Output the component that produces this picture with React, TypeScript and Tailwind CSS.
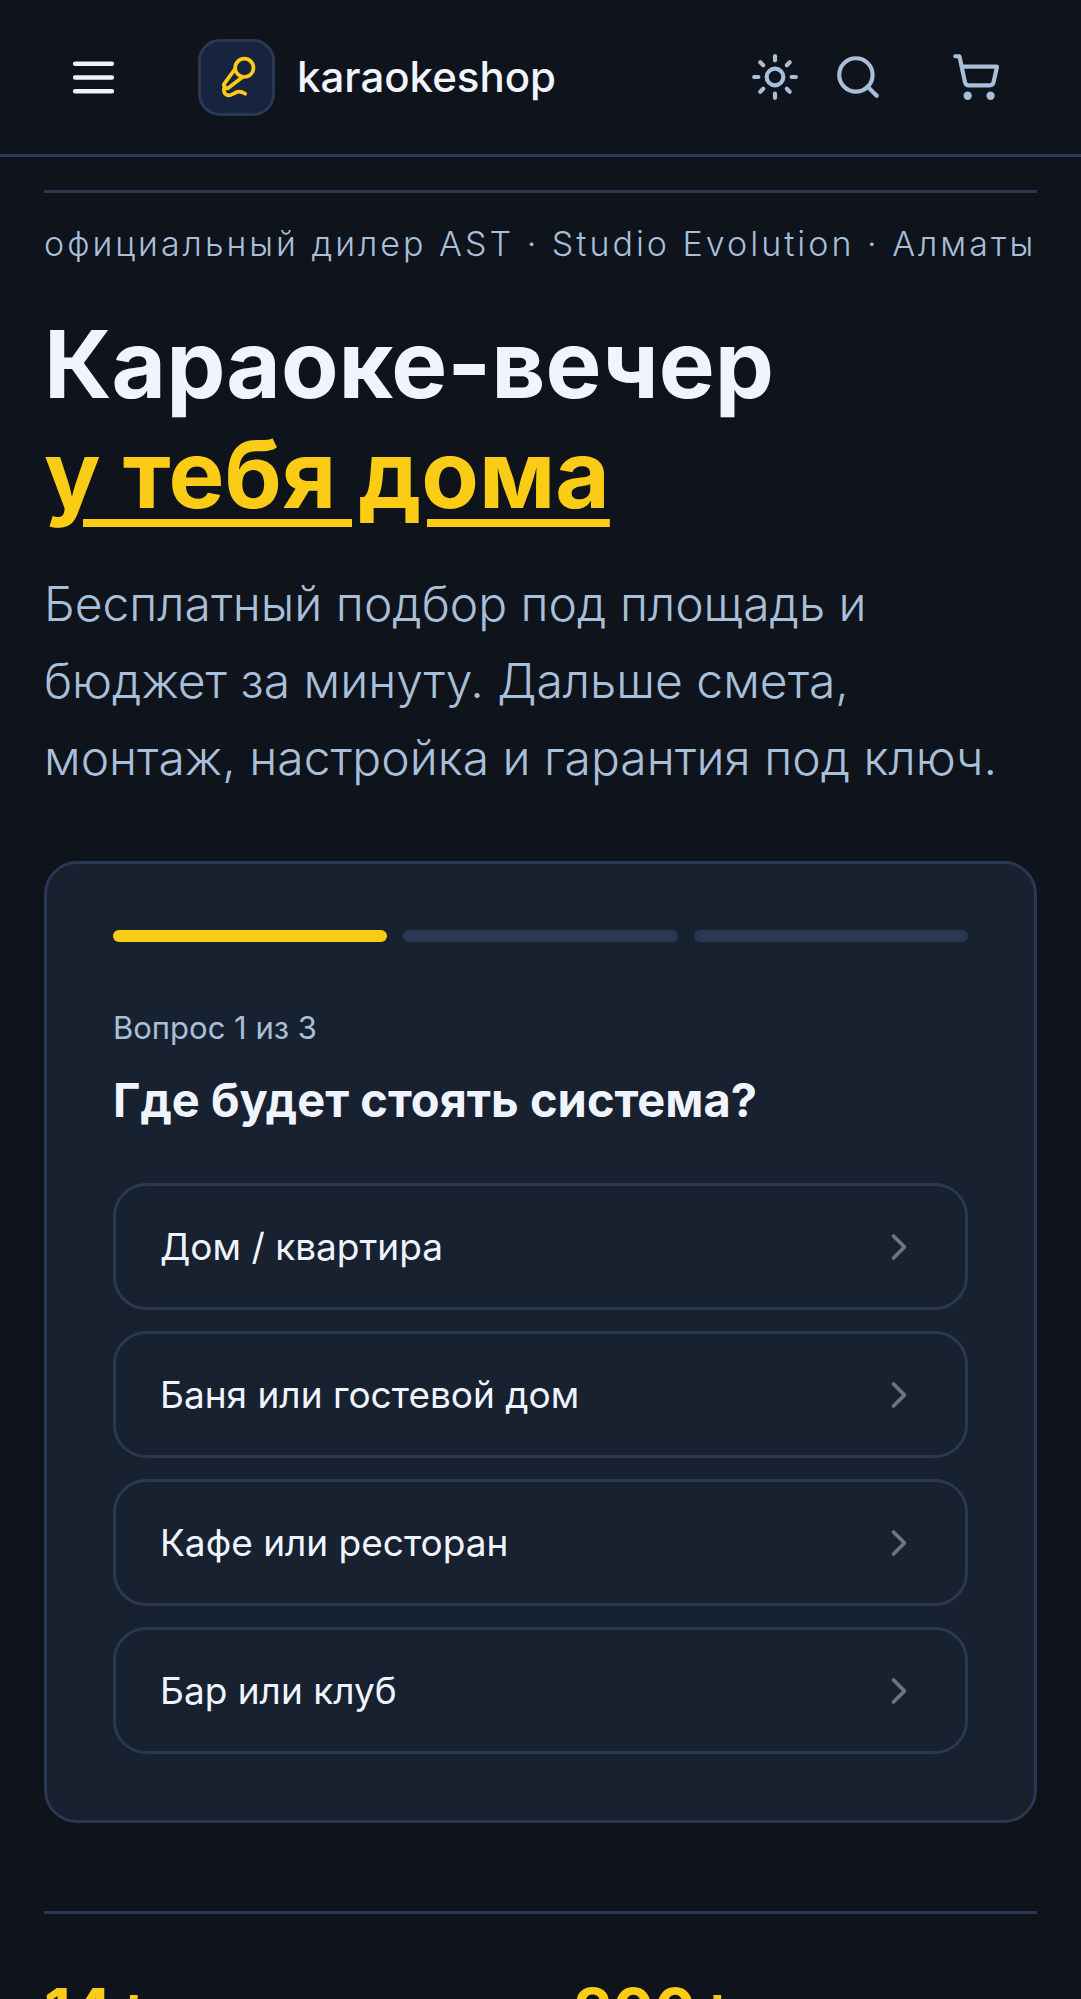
import React, { useState } from 'react';
import { ChevronRight, MicVocal, Search, ShoppingCart, Sun } from 'lucide-react';

const options = ['Дом / квартира', 'Баня или гостевой дом', 'Кафе или ресторан', 'Бар или клуб'];

const stats = ['14+', '200+'];

const Header: React.FC = () => (
  <header className="flex items-center h-[157px] pl-[66px] pr-[80px] border-b-3 border-[#2a3852]">
    <button type="button" aria-label="Меню" className="shrink-0">
      <svg className="w-[55px] h-[55px]" viewBox="0 0 24 24" fill="none" stroke="currentColor" strokeWidth="2" strokeLinecap="round">
        <path d="M4 6h16M4 12h16M4 18h16" />
      </svg>
    </button>

    <a href="#" className="flex items-center gap-[22px] ml-[77px]">
      <span className="flex items-center justify-center w-[77px] h-[77px] rounded-[22px] border-3 border-[#2a3852] bg-[#18233f] text-[#facc15]">
        <MicVocal size={44} />
      </span>
      <span className="text-[42px] leading-[66px] font-medium">karaokeshop</span>
    </a>

    <div className="flex items-center ml-auto text-[#a8bfda]">
      <button type="button" aria-label="Светлая тема"><Sun size={50} /></button>
      <button type="button" aria-label="Поиск" className="ml-[33px]"><Search size={50} /></button>
      <a href="#" aria-label="Корзина" className="ml-[68px]"><ShoppingCart size={50} /></a>
    </div>
  </header>
);

const Quiz: React.FC = () => {
  const [selected, setSelected] = useState<string | null>(null);

  return (
    <section className="mt-[65px] p-[66px] rounded-[33px] border-3 border-[#2a3852] bg-[#18212f]">
      {/* Step progress */}
      <div className="grid grid-cols-3 gap-[16px]">
        <div className="h-[12px] rounded-full bg-[#facc15]"></div>
        <div className="h-[12px] rounded-full bg-[#2a3752]"></div>
        <div className="h-[12px] rounded-full bg-[#2a3752]"></div>
      </div>

      <p className="mt-[61px] text-[31px] leading-[50px] text-[#a8bfda]">Вопрос 1 из 3</p>
      <h2 className="mt-[14px] text-[47px] leading-[66px] font-bold">Где будет стоять система?</h2>

      <div className="mt-[50px] flex flex-col gap-[21px]">
        {options.map(option => (
          <button
            key={option}
            type="button"
            aria-pressed={selected === option}
            onClick={() => setSelected(option)}
            className="flex items-center justify-between h-[127px] px-[44px] rounded-[33px] border-3 border-[#2a3852] text-[37px] leading-[55px] text-left"
          >
            {option}
            <ChevronRight size={44} className="text-[#6b7583]" />
          </button>
        ))}
      </div>
    </section>
  );
};

const App: React.FC = () => {
  return (
    <div className="min-h-screen bg-[#0f131b] text-[#f0f4ff] font-['Inter','Noto_Sans',sans-serif]">
      <Header />

      <main className="px-[44px] pt-[33px]">
        <p className="border-t-3 border-[#2a3852] pt-[26px] text-[34px] leading-[50px] font-light tracking-[3px] text-[#a8bfda] whitespace-nowrap">
          официальный дилер AST · Studio Evolution · Алматы
        </p>

        <h1 className="mt-[40px] text-[94px] leading-[110px] font-bold">
          Караоке-вечер
          <br />
          <span className="text-[#facc15] underline decoration-[8px] underline-offset-[11px]">у тебя дома</span>
        </h1>

        <p className="mt-[36px] text-[48px] leading-[77px] font-light text-[#a8bfda]">
          Бесплатный подбор под площадь и бюджет за минуту. Дальше смета, монтаж, настройка и гарантия под ключ.
        </p>

        <Quiz />

        <div className="mt-[88px] pt-[64px] border-t-3 border-[#2a3852] grid grid-cols-2 gap-[66px]">
          {stats.map(stat => (
            <strong key={stat} className="text-[62px] leading-[66px] font-bold text-[#facc15]">{stat}</strong>
          ))}
        </div>
      </main>
    </div>
  );
};

export default App;
